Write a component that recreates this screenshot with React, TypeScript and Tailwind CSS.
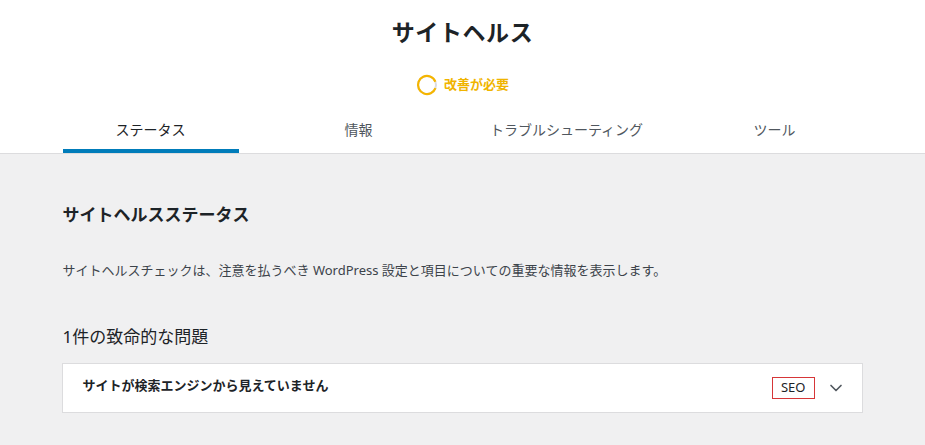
import { ChevronDown } from "lucide-react";

const tabs = ["ステータス", "情報", "トラブルシューティング", "ツール"];

function ProgressRing() {
  // mostly filled ring, small grey gap on the right
  const r = 9;
  const c = 2 * Math.PI * r;
  return (
    <svg width="22" height="22" viewBox="0 0 22 22">
      <circle cx="11" cy="11" r={r} fill="none" stroke="#dcdcde" strokeWidth="2" />
      <circle
        cx="11"
        cy="11"
        r={r}
        fill="none"
        stroke="#f5b500"
        strokeWidth="2.2"
        strokeDasharray={`${c * 0.88} ${c}`}
        transform="rotate(20 11 11)"
      />
    </svg>
  );
}

export default function App() {
  return (
    <div
      className="w-[925px] h-[445px] overflow-hidden bg-[#f0f0f1] text-[#1d2327]"
      style={{ fontFamily: '"Noto Sans", "Noto Sans CJK JP", sans-serif' }}
    >
      <header className="bg-white border-b border-[#dcdcde]">
        <div className="h-16 flex items-center justify-center">
          <h1 className="text-[23px] font-bold tracking-wide leading-none">サイトヘルス</h1>
        </div>
        <div className="h-[42px] flex items-center justify-center gap-1.5">
          <ProgressRing />
          <span className="text-[13px] font-bold text-[#f0b400]">改善が必要</span>
        </div>
        <nav className="max-w-[800px] mx-auto grid grid-cols-4 gap-8 h-[47px]">
          {tabs.map((t, i) => (
            <div
              key={t}
              className={
                i === 0
                  ? "flex items-center justify-center text-[14px] text-[#1d2327] border-b-4 border-[#007cba] pt-1"
                  : "flex items-center justify-center text-[14px] text-[#50575e] border-b-4 border-transparent pt-1"
              }
            >
              {t}
            </div>
          ))}
        </nav>
      </header>

      <main className="max-w-[800px] mx-auto pt-[50px]">
        <h2 className="text-[17px] font-bold leading-[22px]">サイトヘルスステータス</h2>
        <p className="mt-[34px] text-[13px] leading-5 text-[#3c434a]">
          サイトヘルスチェックは、注意を払うべき WordPress 設定と項目についての重要な情報を表示します。
        </p>
        <h3 className="mt-[46px] text-[17px] font-normal leading-[22px]">1件の致命的な問題</h3>
        <div className="mt-[15px] -ml-px bg-white border border-[#dcdcde] h-[50px] flex items-center pl-5 pr-4">
          <span className="text-[13px] font-bold text-[#1d2327] flex-1 pb-[5px]">
            サイトが検索エンジンから見えていません
          </span>
          <span className="border border-[#d63638] h-[22px] px-2 flex items-center text-[13px] text-[#1d2327]">
            SEO
          </span>
          <ChevronDown className="ml-[11px] text-[#50575e]" size={20} strokeWidth={2} />
        </div>
      </main>
    </div>
  );
}
